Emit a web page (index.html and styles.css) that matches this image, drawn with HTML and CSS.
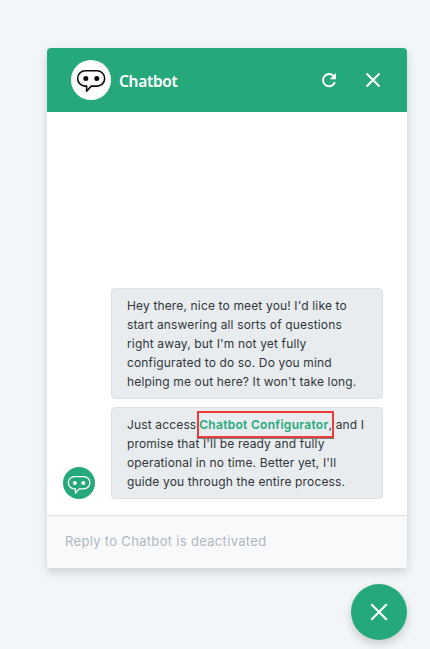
FILE: index.html
```html
<!DOCTYPE html>
<html lang="en">
<head>
<meta charset="utf-8">
<title>Chatbot</title>
<link rel="stylesheet" href="styles.css">
</head>
<body>
<main class="chat">
  <header class="header">
    <div class="logo">
      <svg width="40" height="40" viewBox="0 0 40 40" fill="none" stroke="#0b0b0b" stroke-width="1.6" stroke-linejoin="round">
        <path d="M15.6 26.1H14.3A7.65 7.65 0 0 1 14.3 10.8H26A7.65 7.65 0 0 1 26 26.1H20.2L15.6 31.2Z"/>
        <circle cx="14.8" cy="18.5" r="2.5" fill="#0b0b0b" stroke="none"/>
        <circle cx="25.8" cy="18.5" r="2.5" fill="#0b0b0b" stroke="none"/>
      </svg>
    </div>
    <h1 class="title">Chatbot</h1>
    <button class="icon-button" aria-label="Restart">
      <svg width="20" height="20" viewBox="0 0 20 20" fill="none">
        <path d="M15.9 12.2A6.1 6.1 0 1 1 14.3 5.7" stroke="#fff" stroke-width="2"/>
        <path d="M17 3V9.2H10.8Z" fill="#fff"/>
      </svg>
    </button>
    <button class="icon-button" aria-label="Close">
      <svg width="20" height="20" viewBox="0 0 20 20" fill="none">
        <path d="M3.5 3.5L16.5 16.5M16.5 3.5L3.5 16.5" stroke="#fff" stroke-width="1.9"/>
      </svg>
    </button>
  </header>
  <section class="messages">
    <div class="avatar">
      <svg width="32" height="32" viewBox="0 0 40 40" fill="none" stroke="#fff" stroke-width="1.7" stroke-linejoin="round">
        <path d="M15.6 27.3H14.3A7.65 7.65 0 0 1 14.3 12H26A7.65 7.65 0 0 1 26 27.3H20.2L15.6 32.6Z"/>
        <circle cx="14.8" cy="20" r="2.5" fill="#fff" stroke="none"/>
        <circle cx="25.4" cy="20" r="2.5" fill="#fff" stroke="none"/>
      </svg>
    </div>
    <div class="bubbles">
      <p class="bubble">Hey there, nice to meet you! I'd like to<br>start answering all sorts of questions<br>right away, but I'm not yet fully<br>configurated to do so. Do you mind<br>helping me out here? It won't take long.</p>
      <p class="bubble">Just access <span class="target"><a class="link">Chatbot Configurator</a>,</span> and I<br>promise that I'll be ready and fully<br>operational in no time. Better yet, I'll<br>guide you through the entire process.</p>
    </div>
  </section>
  <footer class="reply">Reply to Chatbot is deactivated</footer>
</main>
<button class="launcher" aria-label="Close chat">
  <svg width="24" height="24" viewBox="0 0 24 24" fill="none">
    <path d="M4.3 4.3L19.7 19.7M19.7 4.3L4.3 19.7" stroke="#fff" stroke-width="2.2"/>
  </svg>
</button>
</body>
</html>
```
FILE: styles.css
```css
* { box-sizing: border-box; }
body {
  margin: 0;
  height: 649px;
  padding: 48px 23px 0 47px;
  display: flex;
  flex-direction: column;
  align-items: flex-end;
  gap: 16px;
  overflow: hidden;
  background: #f2f6f9;
  font-family: Inter, "Liberation Sans", sans-serif;
}
button { padding: 0; border: 0; background: none; }
svg { display: block; }
.chat {
  width: 360px;
  height: 520px;
  display: flex;
  flex-direction: column;
  overflow: hidden;
  background: #fff;
  border-radius: 4px;
  box-shadow: 0 4px 10px rgba(0, 0, 0, .16);
}
.header {
  height: 64px;
  flex: none;
  display: flex;
  align-items: center;
  padding: 0 24px;
  background: #26a97a;
}
.logo { border-radius: 50%; background: #fff; }
.title {
  flex: 1;
  margin: 1px 0 0 8px;
  color: #fff;
  font: 600 15.5px/24px "Noto Sans", sans-serif;
  letter-spacing: -.3px;
}
.icon-button + .icon-button { margin-left: 24px; }
.messages {
  flex: 1;
  display: flex;
  align-items: flex-end;
  gap: 16px;
  padding: 0 24px 16px 16px;
}
.avatar { border-radius: 50%; background: #26a97a; }
.bubbles {
  flex: 1;
  display: flex;
  flex-direction: column;
  gap: 8px;
}
.bubble {
  margin: 0;
  padding: 7px 15px;
  border: 1px solid #dce1e5;
  border-radius: 4px;
  background: #e8ecef;
  color: #30363a;
  font-size: 12px;
  line-height: 19px;
  letter-spacing: .15px;
  white-space: nowrap;
}
.target { position: relative; margin-left: -.7px; }
.target::after {
  content: "";
  position: absolute;
  inset: -6px -2px -6px -2px;
  border: 2px solid #ed3b3b;
  box-shadow: 0 1px 0 #777b7d;
}
.link { color: #26a97a; font-weight: 600; letter-spacing: .3px; }
.reply {
  height: 53px;
  flex: none;
  padding-left: 18px;
  border-top: 1px solid #dddfe1;
  background: #f7f9fb;
  color: #b0b8c0;
  font-size: 13px;
  line-height: 51px;
  letter-spacing: .32px;
}
.launcher {
  width: 56px;
  height: 56px;
  flex: none;
  display: grid;
  place-items: center;
  border-radius: 50%;
  background: #26a97a;
  box-shadow: 0 4px 10px rgba(0, 0, 0, .18);
}
```
